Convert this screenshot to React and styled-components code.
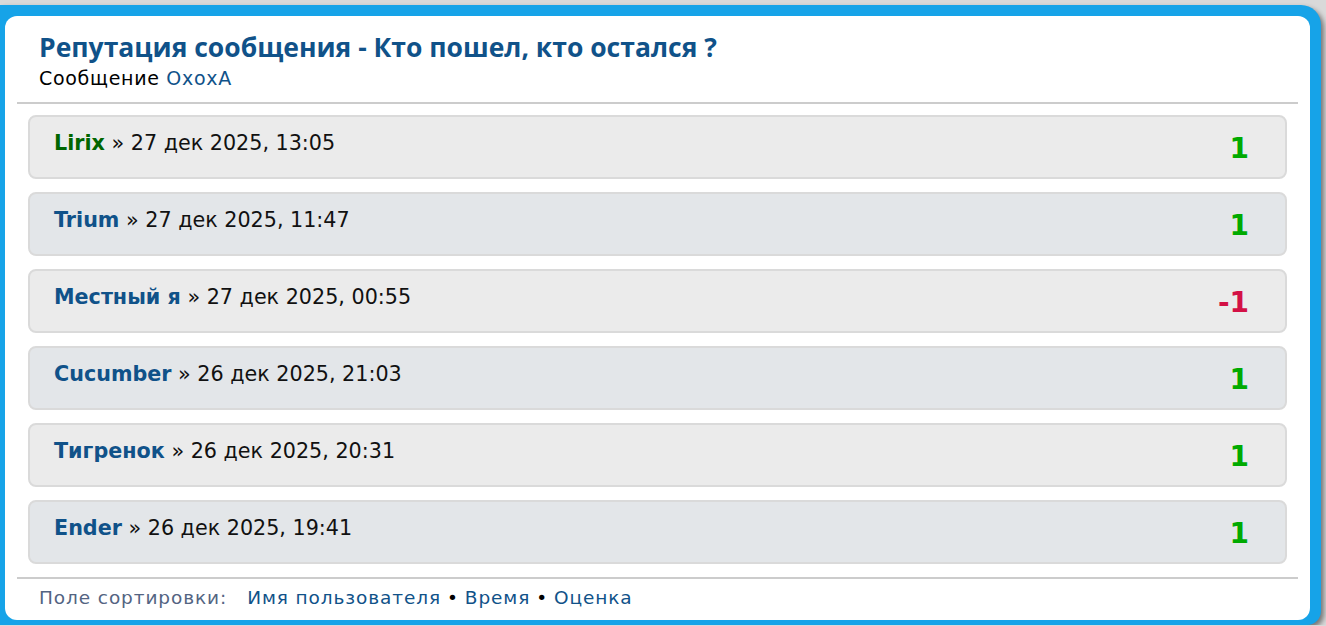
import React from 'react';
import styled, { createGlobalStyle } from 'styled-components';

const GlobalStyle = createGlobalStyle`
	html, body {
		margin: 0;
		padding: 0;
		background: #d9d9d9;
		overflow: hidden;
	}
	body {
		padding-top: 5px;
		font-family: 'DejaVu Sans', Verdana, sans-serif;
	}
`;

const Modal = styled.div`
	box-sizing: border-box;
	width: 1321px;
	height: 620px;
	background: #16a3e8;
	border-radius: 0 20px 14px 0;
	padding: 11px 11px 5px 5px;
	box-shadow: 3px 3px 5px rgba(0, 0, 0, 0.45);
`;

const Panel = styled.div`
	box-sizing: border-box;
	height: 100%;
	background: #fff;
	border-radius: 12px;
	padding: 0 12px;
	display: flex;
	flex-direction: column;
`;

const Header = styled.div`
	padding: 13px 22px 10px;
`;

const Title = styled.h2`
	margin: 0;
	font-family: 'Open Sans', 'DejaVu Sans', sans-serif;
	font-weight: 700;
	font-size: 26.5px;
	line-height: 36px;
	color: #105289;
`;

const Subtitle = styled.div`
	font-size: 19px;
	letter-spacing: 0.7px;
	line-height: 27px;
	color: #000;
`;

const Link = styled.a`
	color: #105289;
	text-decoration: none;
`;

const Divider = styled.hr`
	margin: 0;
	border: none;
	border-top: 2px solid #cccccc;
`;

const List = styled.div`
	display: flex;
	flex-direction: column;
	gap: 13px;
	padding: 11px 11px 13px;
`;

const Row = styled.div`
	box-sizing: border-box;
	height: 64px;
	display: flex;
	justify-content: space-between;
	align-items: center;
	padding: 0 36px 0 24px;
	border: 2px solid #dadada;
	border-radius: 8px;
	background: ${(props) => (props.alt ? '#e3e6e9' : '#ebebeb')};
`;

const Who = styled.div`
	align-self: flex-start;
	padding-top: 15px;
	font-size: 20.7px;
	line-height: 23px;
	color: #111;
`;

const Name = styled.a`
	font-weight: bold;
	text-decoration: none;
	color: ${(props) => props.color || '#105289'};
`;

const Points = styled.span`
	font-size: 28px;
	font-weight: bold;
	padding-top: 3px;
	color: ${(props) => (props.value < 0 ? '#d31145' : '#00aa00')};
`;

const Footer = styled.div`
	padding: 7px 22px;
	font-size: 18.5px;
	letter-spacing: 0.9px;
	line-height: 24px;
	color: #536482;
`;

const SortLabel = styled.span`
	margin-right: 20px;
`;

const Bullet = styled.span`
	color: #000;
	margin: 0 6px;
`;

const votes = [
	{ name: 'Lirix', color: '#006600', date: '27 дек 2025, 13:05', value: 1 },
	{ name: 'Trium', date: '27 дек 2025, 11:47', value: 1 },
	{ name: 'Местный я', date: '27 дек 2025, 00:55', value: -1 },
	{ name: 'Cucumber', date: '26 дек 2025, 21:03', value: 1 },
	{ name: 'Тигренок', date: '26 дек 2025, 20:31', value: 1 },
	{ name: 'Ender', date: '26 дек 2025, 19:41', value: 1 },
];

export default function App() {
	return (
		<>
			<GlobalStyle />
			<Modal>
				<Panel>
					<Header>
						<Title>Репутация сообщения - Кто пошел, кто остался ?</Title>
						<Subtitle>
							Сообщение <Link href='#'>ОхохА</Link>
						</Subtitle>
					</Header>
					<Divider />
					<List>
						{votes.map((v, i) => (
							<Row key={v.name} alt={i % 2 === 1}>
								<Who>
									<Name href='#' color={v.color}>
										{v.name}
									</Name>{' '}
									» {v.date}
								</Who>
								<Points value={v.value}>{v.value}</Points>
							</Row>
						))}
					</List>
					<Divider />
					<Footer>
						<SortLabel>Поле сортировки:</SortLabel>
						<Link href='#'>Имя пользователя</Link>
						<Bullet>•</Bullet>
						<Link href='#'>Время</Link>
						<Bullet>•</Bullet>
						<Link href='#'>Оценка</Link>
					</Footer>
				</Panel>
			</Modal>
		</>
	);
}
